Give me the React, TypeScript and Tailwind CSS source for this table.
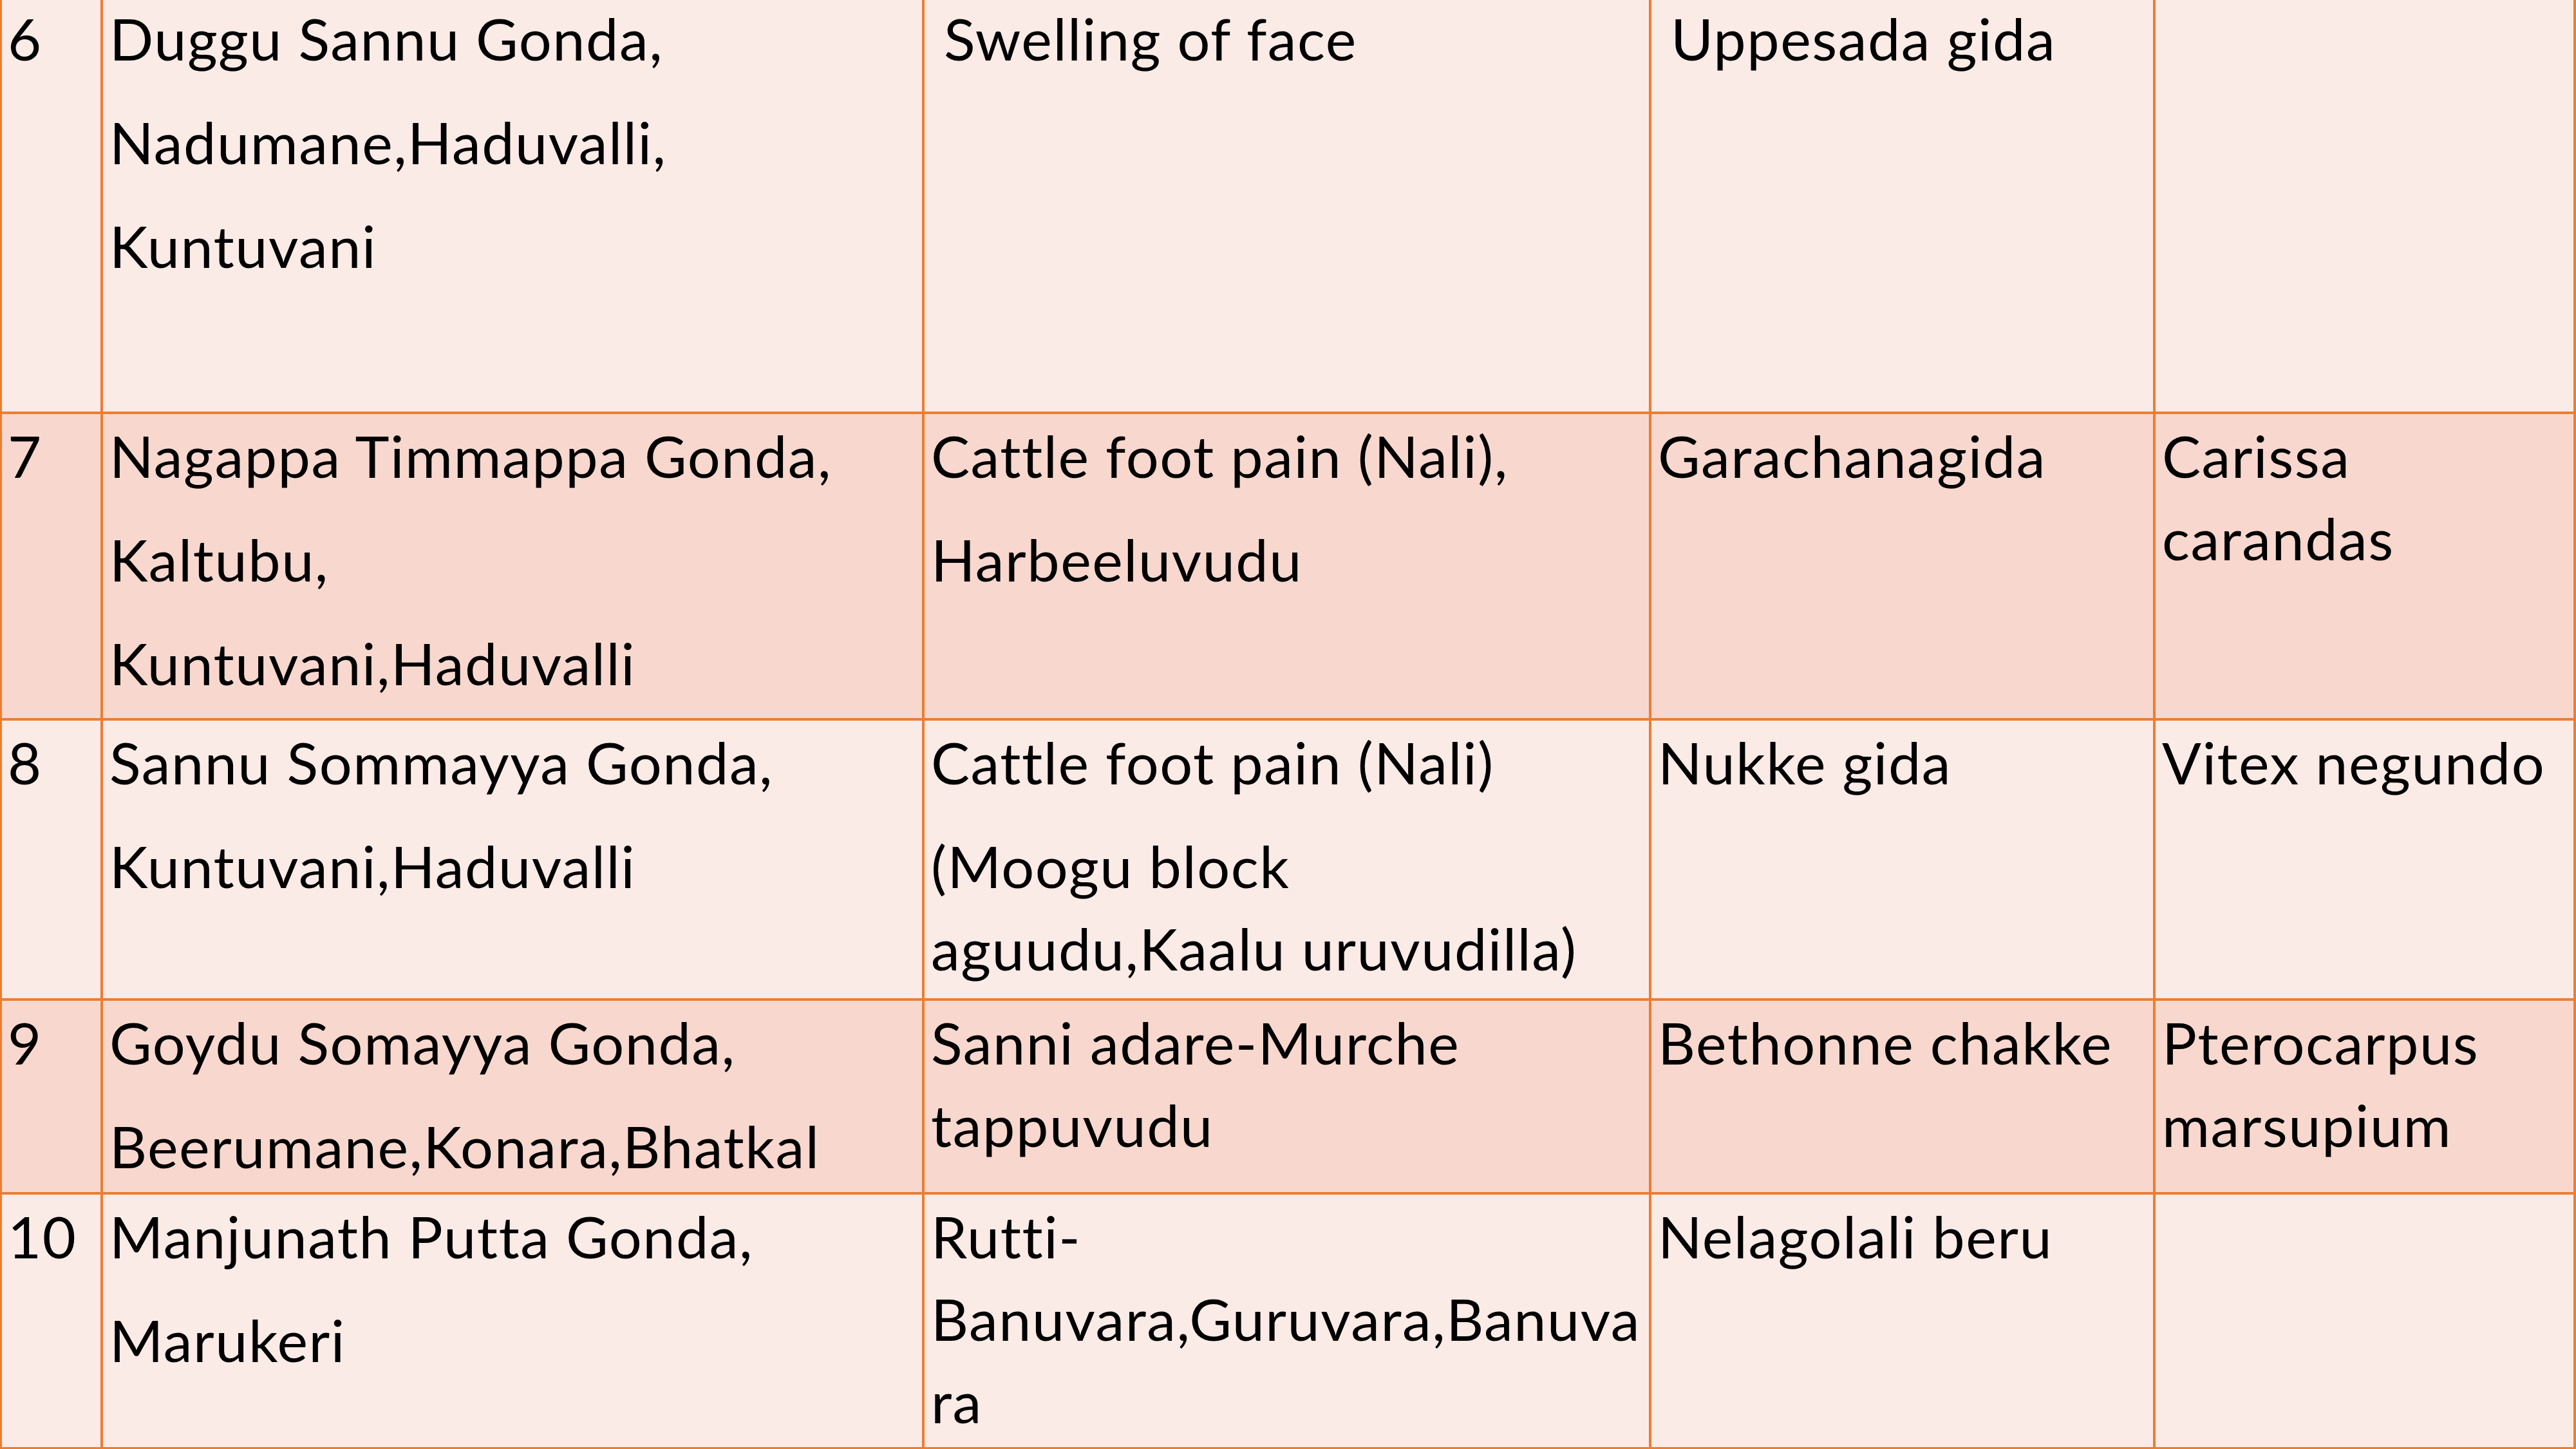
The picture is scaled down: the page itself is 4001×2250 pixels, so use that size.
import React from "react";

type Row = {
  n: string;
  dark: boolean;
  cells: string[][][]; // cells -> paragraphs -> lines
  indent?: boolean[];
};

const rows: Row[] = [
  {
    n: "6",
    dark: false,
    cells: [
      [["Duggu Sannu Gonda,"], ["Nadumane,Haduvalli,"], ["Kuntuvani"]],
      [["Swelling of face"]],
      [["Uppesada gida"]],
      [],
    ],
    indent: [false, true, true, false],
  },
  {
    n: "7",
    dark: true,
    cells: [
      [["Nagappa Timmappa Gonda,"], ["Kaltubu,"], ["Kuntuvani,Haduvalli"]],
      [["Cattle foot pain (Nali),"], ["Harbeeluvudu"]],
      [["Garachanagida"]],
      [["Carissa", "carandas"]],
    ],
  },
  {
    n: "8",
    dark: false,
    cells: [
      [["Sannu Sommayya Gonda,"], ["Kuntuvani,Haduvalli"]],
      [["Cattle foot pain (Nali)"], ["(Moogu block", "aguudu,Kaalu uruvudilla)"]],
      [["Nukke gida"]],
      [["Vitex negundo"]],
    ],
  },
  {
    n: "9",
    dark: true,
    cells: [
      [["Goydu Somayya Gonda,"], ["Beerumane,Konara,Bhatkal"]],
      [["Sanni adare-Murche", "tappuvudu"]],
      [["Bethonne chakke"]],
      [["Pterocarpus", "marsupium"]],
    ],
  },
  {
    n: "10",
    dark: false,
    cells: [
      [["Manjunath Putta Gonda,"], ["Marukeri"]],
      [["Rutti-", "Banuvara,Guruvara,Banuva", "ra"]],
      [["Nelagolali beru"]],
      [],
    ],
  },
];

function Cell({
  paras,
  dark,
  first,
  indent,
}: {
  paras: string[][];
  dark: boolean;
  first?: boolean;
  indent?: boolean;
}) {
  return (
    <div
      className={
        "border-r-4 border-b-4 border-[#ED7D31] pt-0 overflow-hidden " +
        (first ? "border-l-[3px] pl-[9px] " : "pl-[10px] ") +
        (dark ? "bg-[#F8D8CE]" : "bg-[#FBEBE7]")
      }
    >
      <div className={"flex flex-col gap-[33px] " + (indent ? "pl-[20px]" : "")}>
        {paras.map((p, i) => (
          <div key={i} className="flex flex-col">
            {p.map((l, j) => (
              <div key={j} className="whitespace-nowrap leading-[128px] h-[128px]">
                {l}
              </div>
            ))}
          </div>
        ))}
      </div>
    </div>
  );
}

export default function App() {
  return (
    <div className="w-[4001px] h-[2250px] overflow-hidden bg-white">
      <div
        className="mt-[-5px] grid grid-cols-[160px_1276px_1129px_783px_653px] grid-rows-[648px_476px_435px_301px_396px] text-black text-[90px] tracking-[1.5px]"
        style={{ fontFamily: "Lato, 'Open Sans', sans-serif" }}
      >
        {rows.map((r) => (
          <React.Fragment key={r.n}>
            <Cell paras={[[r.n]]} dark={r.dark} first />
            {r.cells.map((c, i) => (
              <Cell key={i} paras={c} dark={r.dark} indent={r.indent ? r.indent[i] : false} />
            ))}
          </React.Fragment>
        ))}
      </div>
    </div>
  );
}
